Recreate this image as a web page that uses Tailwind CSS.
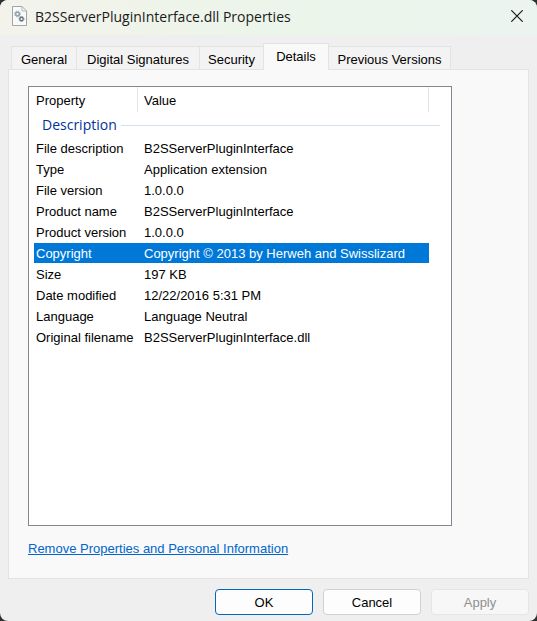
<!DOCTYPE html>
<html lang="en">
<head>
    <meta charset="UTF-8">
    <meta name="viewport" content="width=device-width, initial-scale=1.0">
    <title>B2SServerPluginInterface.dll Properties</title>
    <script src="https://cdn.jsdelivr.net/npm/@tailwindcss/browser@4"></script>
</head>
<body class="bg-[#303030]">
    <main class="flex flex-col min-h-screen overflow-hidden rounded-lg bg-[#efefef] font-['Liberation_Sans',Arial,sans-serif] text-[13px] leading-5 text-black">
        <!-- Title bar -->
        <header class="flex items-center h-[35px] pl-3 pr-[14px] bg-linear-to-r from-[#f3f3ec] via-[#ecf5e9] to-[#ebf4ef]">
            <svg class="w-4 h-5 mr-[7px] mb-[3px]" viewBox="0 0 16 20" fill="none" aria-hidden="true">
                <path d="M.5.5h9.5l4.5 4.5v14.5H.5z" fill="#fafafa" stroke="#a3a5a5"/>
                <path d="M10 .5v4.5h4.5" stroke="#b4b6b6"/>
                <circle cx="5.500" cy="8" r="1.900" stroke="#95a3af" stroke-width="1.600"/>
                <circle cx="5.500" cy="8" r="3" stroke="#a3b0ba" stroke-width="1" stroke-dasharray="1.200 1.156"/>
                <circle cx="9.500" cy="13" r="1.700" stroke="#66747f" stroke-width="1.400"/>
                <circle cx="9.500" cy="13" r="2.600" stroke="#7b8894" stroke-width="1" stroke-dasharray="1 1.042"/>
            </svg>
            <h1 class="flex-1 pb-0.5 font-['Open_Sans','Noto_Sans',sans-serif] text-[14px] leading-5 text-[#1a1a1a] whitespace-nowrap">B2SServerPluginInterface.dll Properties</h1>
            <button type="button" aria-label="Close" class="mb-1">
                <svg class="w-3 h-3" viewBox="0 0 12 12" stroke="#1a1a1a" stroke-width="1.200" aria-hidden="true">
                    <path d="M.3.3l11.400 11.400M11.700.3L.3 11.700"/>
                </svg>
            </button>
        </header>

        <!-- Tabs -->
        <div role="tablist" class="flex items-end pt-2 pl-[11px] -mb-px relative whitespace-nowrap leading-4">
            <button type="button" role="tab" class="w-[66px] h-6 border border-[#e3e3e3] bg-[#f3f3f3] pt-[3px]">General</button>
            <button type="button" role="tab" class="w-[123px] h-6 border border-l-0 border-[#e3e3e3] bg-[#f3f3f3] pt-[3px]">Digital Signatures</button>
            <button type="button" role="tab" class="w-[63px] h-6 border border-x-0 border-[#e3e3e3] bg-[#f3f3f3] pt-[3px]">Security</button>
            <button type="button" role="tab" aria-selected="true" class="w-[66px] h-[27px] border border-b-0 border-[#e3e3e3] bg-[#f9f9f9]">Details</button>
            <button type="button" role="tab" class="w-[122px] h-6 border border-l-0 border-[#e3e3e3] bg-[#f3f3f3] pt-[3px]">Previous Versions</button>
        </div>

        <!-- Details page -->
        <section role="tabpanel" class="flex flex-col flex-1 mx-2 pt-4 pb-[19px] pl-[19px] pr-[76px] border border-[#e3e3e3] bg-[#f9f9f9]">
            <div class="flex-1 pl-[5px] pr-[11px] bg-white border border-[#828790]">
                <table class="w-full table-fixed border-separate border-spacing-0 text-left leading-[18px] whitespace-nowrap">
                    <colgroup>
                        <col class="w-[104px]">
                        <col>
                        <col class="w-[11px]">
                    </colgroup>
                    <thead>
                        <tr class="h-[25px]">
                            <th scope="col" class="p-0 pl-0.5 pt-0.5 font-normal border-r border-[#e5e5e5]">Property</th>
                            <th scope="col" class="p-0 pl-1.5 pt-0.5 font-normal border-r border-[#e5e5e5]">Value</th>
                            <td></td>
                        </tr>
                    </thead>
                    <tbody>
                        <tr class="h-[26px]">
                            <th colspan="3" scope="colgroup" class="p-0 pl-2 font-normal">
                                <div class="flex items-center gap-1 font-['Open_Sans','Noto_Sans',sans-serif] text-[14px] text-[#003399]">
                                    Description
                                    <span class="flex-1 h-px bg-[#d5dff0]"></span>
                                </div>
                            </th>
                        </tr>
                        <tr class="h-[21px]">
                            <th scope="row" class="p-0 pl-0.5 pt-0.5 font-normal border-b border-white">File description</th>
                            <td class="p-0 pl-1.5 pt-0.5 border-b border-white">B2SServerPluginInterface</td>
                        </tr>
                        <tr class="h-[21px]">
                            <th scope="row" class="p-0 pl-0.5 pt-0.5 font-normal border-b border-white">Type</th>
                            <td class="p-0 pl-1.5 pt-0.5 border-b border-white">Application extension</td>
                        </tr>
                        <tr class="h-[21px]">
                            <th scope="row" class="p-0 pl-0.5 pt-0.5 font-normal border-b border-white">File version</th>
                            <td class="p-0 pl-1.5 pt-0.5 border-b border-white">1.0.0.0</td>
                        </tr>
                        <tr class="h-[21px]">
                            <th scope="row" class="p-0 pl-0.5 pt-0.5 font-normal border-b border-white">Product name</th>
                            <td class="p-0 pl-1.5 pt-0.5 border-b border-white">B2SServerPluginInterface</td>
                        </tr>
                        <tr class="h-[21px]">
                            <th scope="row" class="p-0 pl-0.5 pt-0.5 font-normal border-b border-white">Product version</th>
                            <td class="p-0 pl-1.5 pt-0.5 border-b border-white">1.0.0.0</td>
                        </tr>
                        <tr class="h-[21px] text-white" aria-selected="true">
                            <th scope="row" class="p-0 pl-0.5 pt-0.5 font-normal border-b border-white bg-[#0078d7]">Copyright</th>
                            <td class="p-0 pl-1.5 pt-0.5 border-b border-white bg-[#0078d7]">Copyright © 2013 by Herweh and Swisslizard</td>
                        </tr>
                        <tr class="h-[21px]">
                            <th scope="row" class="p-0 pl-0.5 pt-0.5 font-normal border-b border-white">Size</th>
                            <td class="p-0 pl-1.5 pt-0.5 border-b border-white">197 KB</td>
                        </tr>
                        <tr class="h-[21px]">
                            <th scope="row" class="p-0 pl-0.5 pt-0.5 font-normal border-b border-white">Date modified</th>
                            <td class="p-0 pl-1.5 pt-0.5 border-b border-white">12/22/2016 5:31 PM</td>
                        </tr>
                        <tr class="h-[21px]">
                            <th scope="row" class="p-0 pl-0.5 pt-0.5 font-normal border-b border-white">Language</th>
                            <td class="p-0 pl-1.5 pt-0.5 border-b border-white">Language Neutral</td>
                        </tr>
                        <tr class="h-[21px]">
                            <th scope="row" class="p-0 pl-0.5 pt-0.5 font-normal border-b border-white">Original filename</th>
                            <td class="p-0 pl-1.5 pt-0.5 border-b border-white">B2SServerPluginInterface.dll</td>
                        </tr>
                    </tbody>
                </table>
            </div>
            <a href="#" class="self-start mt-[13px] text-[#0066cc] underline">Remove Properties and Personal Information</a>
        </section>

        <!-- Dialog buttons -->
        <footer class="flex justify-end gap-[10px] pt-[10px] pb-1.5 pr-2">
            <button type="button" class="w-[98px] h-[26px] pt-0.5 rounded border border-[#0067c0] bg-[#fdfdfd]">OK</button>
            <button type="button" class="w-[98px] h-[26px] pt-0.5 rounded border border-[#d0d0d0] bg-[#fdfdfd]">Cancel</button>
            <button type="button" disabled class="w-[98px] h-[26px] pt-0.5 rounded border border-[#e5e5e5] bg-[#f7f7f7] text-[#8f8f8f]">Apply</button>
        </footer>
    </main>
</body>
</html>
